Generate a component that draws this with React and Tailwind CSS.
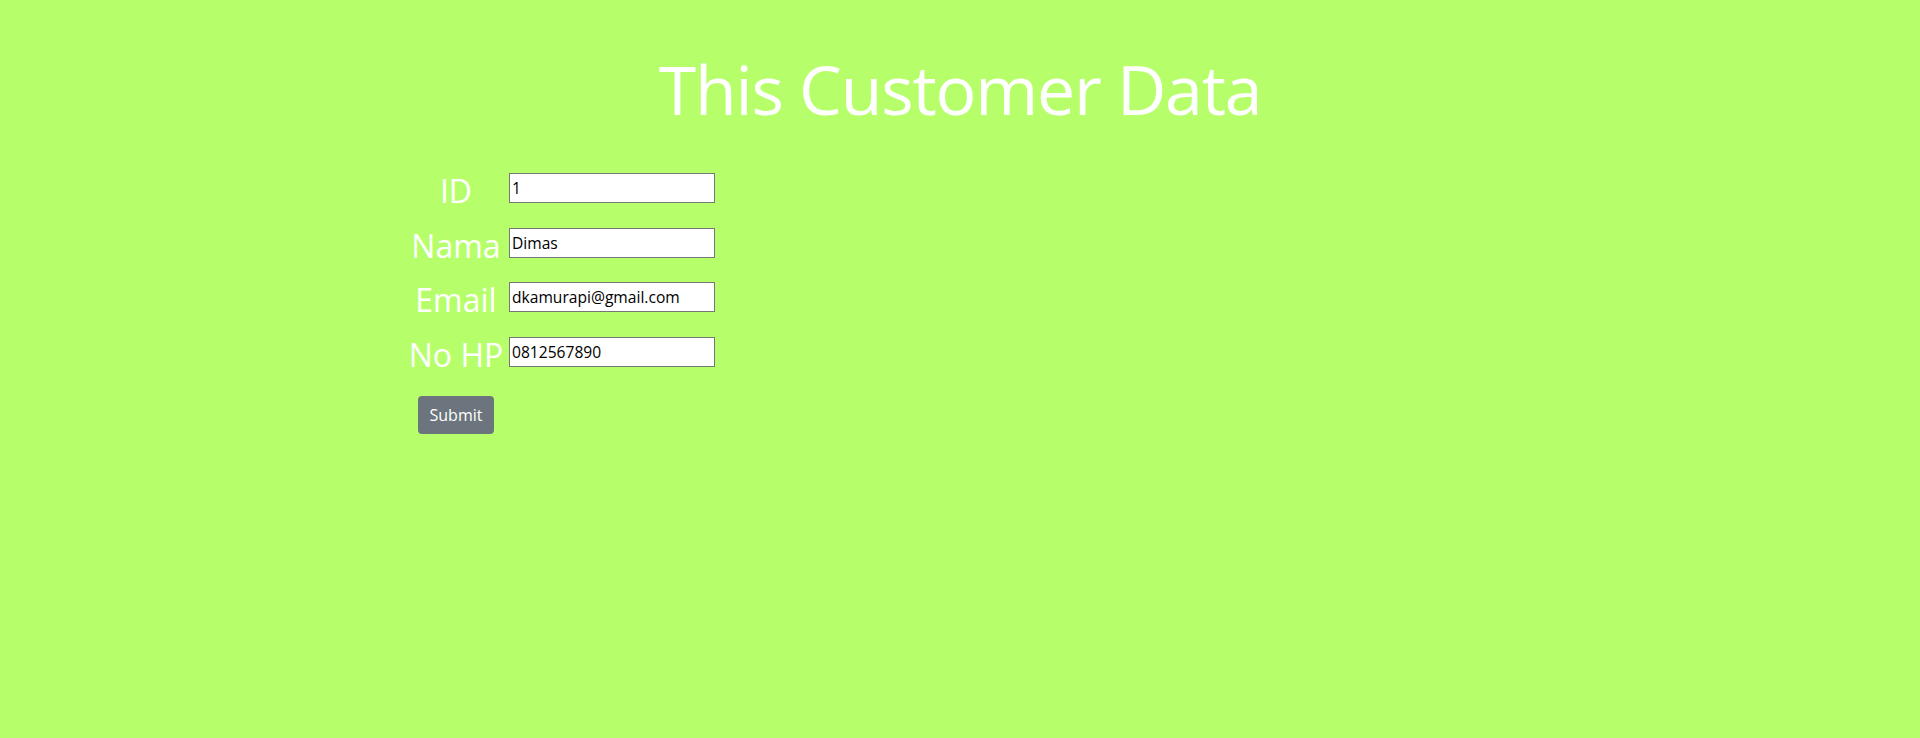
import React from "react";

const rows = [
  { label: "ID", value: "1" },
  { label: "Nama", value: "Dimas" },
  { label: "Email", value: "dkamurapi@gmail.com" },
  { label: "No HP", value: "0812567890" },
];

export default function App() {
  return (
    <div
      className="min-h-screen w-full bg-[#b6ff6b] text-white"
      style={{ fontFamily: '"Open Sans", "Noto Sans", sans-serif' }}
    >
      <div className="pt-[48px] text-center">
        <h1 className="text-[68px] leading-[1.2] tracking-[-1.2px] font-normal">This Customer Data</h1>
      </div>
      <form className="pl-[406px] pt-[31px]" onSubmit={(e) => e.preventDefault()}>
        {rows.map((r) => (
          <div key={r.label} className="flex h-[54.7px] items-center">
            <label className="w-[100px] shrink-0 pt-[6px] text-center text-[32px] leading-[48px] whitespace-nowrap">
              {r.label}
            </label>
            <input
              type="text"
              defaultValue={r.value}
              className="ml-[3px] h-[30px] w-[206px] border border-[#767676] bg-white px-[2px] text-[15.6px] text-black outline-none"
            />
          </div>
        ))}
        <div className="flex w-[100px] justify-center pt-[17px]">
          <button
            type="submit"
            className="h-[38px] w-[76px] rounded-[4px] bg-[#6c757d] text-[16px] leading-6 text-white"
          >
            Submit
          </button>
        </div>
      </form>
    </div>
  );
}
